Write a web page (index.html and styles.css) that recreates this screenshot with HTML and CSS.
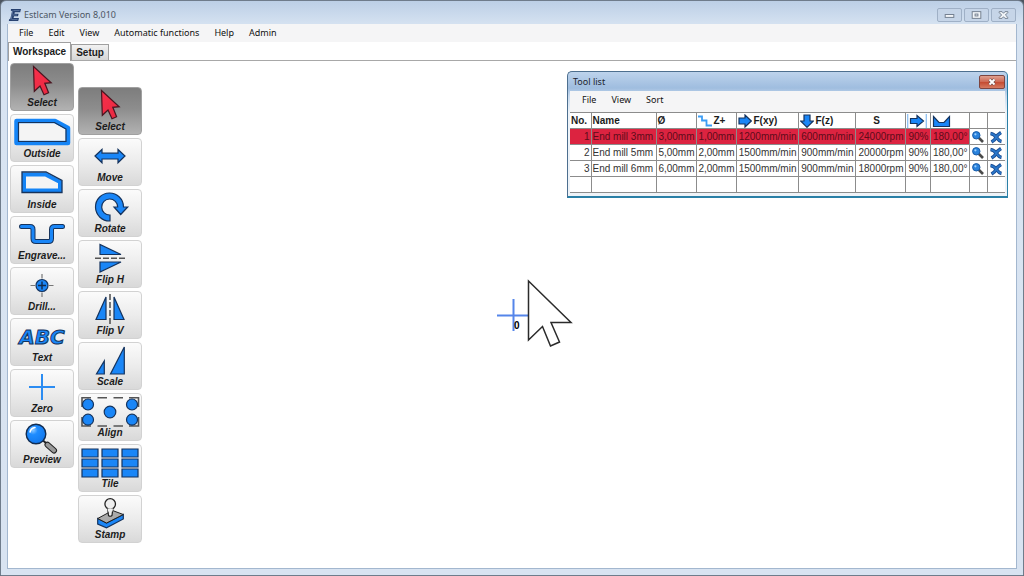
FILE: index.html
```html
<!DOCTYPE html>
<html lang="en">
<head>
<meta charset="utf-8">
<title>Estlcam Version 8,010</title>
<link rel="stylesheet" href="styles.css">
</head>
<body>
<svg class="defs" aria-hidden="true">
  <defs>
    <linearGradient id="cursor-red" x1="0" y1="0" x2="1" y2="1"><stop offset="0" stop-color="#f8304c"/><stop offset="1" stop-color="#e8283f"/></linearGradient>
    <radialGradient id="lens" cx="0.35" cy="0.3" r="0.8"><stop offset="0" stop-color="#8cc8ff"/><stop offset="0.3" stop-color="#1e8cff"/><stop offset="1" stop-color="#0f74ea"/></radialGradient>
    <symbol id="i-select" viewBox="1 1 62 33"><path class="ico-red" d="M23.5 3.5L41.2 19.7L34.8 20.3L38.6 29.7L34 31.7L30 23L24.3 28.3Z"/></symbol>
    <symbol id="i-lens" viewBox="0 0 14 14"><path d="M7 7L12 12" stroke="#4a4a4a" stroke-width="2.6"/><circle cx="5.3" cy="5.3" r="3.7" fill="#2a82dc" stroke="#175ba8"/><circle cx="4.4" cy="4.3" r="1.1" fill="#9cd0ff"/></symbol>
    <symbol id="i-del" viewBox="0 0 14 14"><path d="M1.500 3.500Q5 4 7.500 7.500T12.500 11.500M12 2.500Q8 5 7 7.500T2.500 12" fill="none" stroke="#1d4e94" stroke-width="3.400"/><path d="M1.800 3.500Q5 4 7.500 7.500T12 11.300M11.700 3Q8 5 7 7.500T3 11.700" fill="none" stroke="#2a78cc" stroke-width="1.600"/></symbol>
  </defs>
</svg>

<div class="window">
  <header class="titlebar">
    <svg class="logo" viewBox="0 0 14 14" aria-hidden="true"><path d="M3 1H13L12.2 4.2H6.8L6.5 5.8H10.6L10 8.2H6L5.6 10H11L10.2 13H.8L1.2 11.2L2.4 10.6L4 3.2L2.8 2.6Z" fill="#26406f"/><path d="M4.8 2.5L3 12M5.5 2.6H11.5M5 7H9M4 11.6H9.5" stroke="#7f97bd" stroke-width=".6" fill="none"/></svg>
    <h1 class="title">Estlcam Version 8,010</h1>
    <div class="caption">
      <button class="cap" aria-label="Minimize"><svg viewBox="0 0 24 12"><rect x="7.5" y="5.5" width="9" height="3"/></svg></button>
      <button class="cap" aria-label="Restore"><svg viewBox="0 0 24 12"><rect x="7.5" y="2.5" width="9" height="7"/><rect x="10.5" y="5" width="3" height="2"/></svg></button>
      <button class="cap" aria-label="Close"><svg viewBox="0 0 24 12"><path d="M7.5 2.5H10.5L12 4.2L13.500 2.500H16.500V3.500L14 6L16.500 8.500V9.500H13.500L12 7.800L10.500 9.500H7.500V8.500L10 6L7.500 3.500Z"/></svg></button>
    </div>
  </header>

  <div class="client">
    <nav class="menu" aria-label="Main">
      <button>File</button><button>Edit</button><button>View</button><button>Automatic functions</button><button>Help</button><button>Admin</button>
    </nav>
    <div class="tabs" role="tablist">
      <button class="tab tab-active" role="tab" aria-selected="true">Workspace</button>
      <button class="tab" role="tab" aria-selected="false">Setup</button>
    </div>

    <main class="workspace">
      <div class="tools">
        <button class="tool tool-on"><svg viewBox="1 1 62 33"><use href="#i-select" x="1" y="1" width="62" height="33"/></svg><span>Select</span></button>
        <button class="tool"><svg viewBox="1 1 62 33"><path d="M6.500 7H45L58 14V29H6.500Z" fill="#f4f4f4" stroke="#1484f6" stroke-width="4.500" stroke-linejoin="round"/><path d="M8.500 8.500H44.500L56 15V27.500H8.500Z" fill="none" stroke="#16335c" stroke-width="1.200"/></svg><span>Outside</span></button>
        <button class="tool"><svg viewBox="1 1 62 33"><path d="M14 9.500H35.500L50 17V25.500H14Z" fill="#f4f4f4" stroke="#1484f6" stroke-width="4"/><path d="M12 7H36L52 15.500V27.500H12Z" fill="none" stroke="#16335c" stroke-width="1.300"/></svg><span>Inside</span></button>
        <button class="tool"><svg viewBox="1 1 62 33"><path class="groove-edge" d="M11.500 10.500H20Q23 10.500 23 13.500V22.500Q23 25.500 26 25.500H38.500Q41.500 25.500 41.500 22.500V13.500Q41.500 10.500 44.500 10.500H52.500"/><path class="groove" d="M11.500 10.500H20Q23 10.500 23 13.500V22.500Q23 25.500 26 25.500H38.500Q41.500 25.500 41.500 22.500V13.500Q41.500 10.500 44.500 10.500H52.500"/></svg><span>Engrave...</span></button>
        <button class="tool"><svg viewBox="1 1 62 33"><circle class="ico" cx="32" cy="18.500" r="6"/><path d="M20.500 18.500H25M39 18.500H43.500M32 7V11.500M32 25.500V30" stroke="#777" stroke-width="1.200"/><path d="M28 18.500H36M32 14.500V22.500" stroke="#112b4d" stroke-width="1.400"/></svg><span>Drill...</span></button>
        <button class="tool"><svg viewBox="1 1 62 33"><text class="abc" x="32" y="26" text-anchor="middle">ABC</text></svg><span>Text</span></button>
        <button class="tool"><svg viewBox="1 1 62 33"><path d="M19 18H45M32 5V31" stroke="#2b8cf2" stroke-width="2"/></svg><span>Zero</span></button>
        <button class="tool"><svg viewBox="1 1 62 33"><path d="M33 20.500L36.500 23.500" stroke="#222" stroke-width="2"/><path d="M37.500 24.800L44 30.500" stroke="#222" stroke-width="6" stroke-linecap="round"/><path d="M37.500 24.800L44 30.500" stroke="#9a9a9a" stroke-width="4" stroke-linecap="round"/><circle cx="26" cy="14" r="9.800" fill="url(#lens)" stroke="#122c50" stroke-width="1.400"/><path d="M20 12Q21 8 25 7.500" fill="none" stroke="#fff" stroke-width="1.500" stroke-linecap="round"/></svg><span>Preview</span></button>
      </div>

      <div class="tools tools-edit">
        <button class="tool tool-on"><svg viewBox="1 1 62 33"><use href="#i-select" x="1" y="1" width="62" height="33"/></svg><span>Select</span></button>
        <button class="tool"><svg viewBox="1 1 62 33"><path class="ico" d="M17 18L24 11.500V15.200H40V11.500L47 18L40 24.800V21H24V24.800Z"/></svg><span>Move</span></button>
        <button class="tool"><svg viewBox="1 1 62 33"><path class="ico" d="M32 32A14 14 0 1 1 45.500 18H49.700L42.700 25.500L36 18H39.700A8 8 0 1 0 32 26Z"/></svg><span>Rotate</span></button>
        <button class="tool"><svg viewBox="1 1 62 33"><path class="ico" d="M22 4.500V14.500H43ZM22 32V22H43Z"/><path class="axis" d="M17 18.300H47"/></svg><span>Flip H</span></button>
        <button class="tool"><svg viewBox="1 1 62 33"><path class="ico" d="M18 28.500H28V6ZM46 28.500H36V6Z"/><path class="axis" d="M32 3V34"/></svg><span>Flip V</span></button>
        <button class="tool"><svg viewBox="1 1 62 33"><path class="ico" d="M18.500 32H26.300V19ZM32.500 32H46.300V5Z"/></svg><span>Scale</span></button>
        <button class="tool"><svg viewBox="1 1 62 33"><path d="M4 14V4.700H13M19.500 4.700H29M35.500 4.700H45M51 4.700H60.500V14M60.500 24V33H51M45 33H35.500M29 33H19.500M13 33H4V24" fill="none" stroke="#555" stroke-width="1.600"/><g class="ico"><circle cx="10" cy="11.500" r="5.500"/><circle cx="54" cy="11.500" r="5.500"/><circle cx="32" cy="19" r="5.800"/><circle cx="10" cy="26.700" r="5.500"/><circle cx="54" cy="26.700" r="5.500"/></g></svg><span>Align</span></button>
        <button class="tool"><svg viewBox="1 1 62 33"><path class="ico" d="M4 5H20V13H4ZM24 5H40V13H24ZM44 5H60V13H44ZM4 15H20V23H4ZM24 15H40V23H24ZM44 15H60V23H44ZM4 25H20V33H4ZM24 25H40V33H24ZM44 25H60V33H44Z"/></svg><span>Tile</span></button>
        <button class="tool"><svg viewBox="1 1 62 33"><path class="ico" d="M19.700 23.500L28.500 28L45.300 19.500V24L28.500 32.800L19.700 29Z"/><path d="M19.700 23.500L34.500 15.500L45.300 19.500L28.500 28Z" fill="#aaa" stroke="#222"/><path d="M29.500 12.500L30.500 20.500Q32 22 34 20.500L35 12.500Z" fill="#eee" stroke="#222" stroke-width="1.200"/><circle cx="32.200" cy="9" r="5.300" fill="#eee" stroke="#222" stroke-width="1.300"/><path d="M29.500 13.500L30 16.500H34.500L35 13.500" fill="#eee"/></svg><span>Stamp</span></button>
      </div>

      <div class="canvas">
        <svg class="origin" viewBox="0 0 32 34" aria-hidden="true"><path d="M0 16.500H32M16.500 0V32" stroke="#5585ea" stroke-width="2"/></svg>
        <span class="origin-label">0</span>
        <svg class="pointer" viewBox="0 0 46 70" aria-hidden="true"><path d="M1.500 2L44 43.500H24L32.500 63L23.500 67L15.500 47.500L1.500 61Z" fill="#fff" stroke="#2b2b2b" stroke-width="1.500"/></svg>

        <section class="toollist" aria-label="Tool list">
          <header class="tl-title"><h2>Tool list</h2><button class="tl-close" aria-label="Close tool list"><svg viewBox="0 0 24 12"><path d="M9.500 3.500L14.500 8.500M14.500 3.500L9.500 8.500" stroke="#75524d" stroke-width="3.200"/><path d="M9.500 3.500L14.500 8.500M14.500 3.500L9.500 8.500" stroke="#fff" stroke-width="1.800"/></svg></button></header>
          <nav class="menu tl-menu" aria-label="Tool list"><button>File</button><button>View</button><button>Sort</button></nav>
          <table class="grid">
            <colgroup><col class="c-no"><col class="c-name"><col class="c-dia"><col class="c-dia"><col class="c-fxy"><col class="c-fz"><col class="c-s"><col class="c-pct"><col class="c-ang"><col class="c-act"><col class="c-act"></colgroup>
            <thead>
              <tr>
                <th>No.</th><th>Name</th><th>Ø</th>
                <th><div class="hd"><svg class="h-ico" viewBox="0 0 14 14"><path d="M0 2.500H4V6.500H8.500V11.500H14" fill="none" stroke="#3c9df5" stroke-width="1.800"/></svg>Z+</div></th>
                <th><div class="hd"><svg class="h-ico" viewBox="0 0 14 14"><path class="ico" d="M1 4H7V1L13.300 7L7 13V10H1Z"/></svg>F(xy)</div></th>
                <th><div class="hd"><svg class="h-ico" viewBox="0 0 14 14"><path class="ico" d="M4 1H10V7H13.300L7 13.300L.7 7H4Z"/></svg>F(z)</div></th>
                <th class="mid">S</th>
                <th><div class="hd"><svg class="h-wide" viewBox="0 0 20 14"><path d="M.7 0V14M19.300 0V14" stroke="#8fc0f2" stroke-width="1.300"/><path class="ico" d="M3.500 4.500H10V1.500L16.500 7L10 12.500V9.500H3.500Z"/></svg></div></th>
                <th><div class="hd"><svg class="h-wide" viewBox="0 0 20 14"><path class="ico" d="M1.500 2.500L7 8.500H12L17.500 2.500V12.500H1.500Z"/></svg></div></th>
                <th></th><th></th>
              </tr>
            </thead>
            <tbody>
              <tr class="sel"><td>1</td><td class="name">End mill 3mm</td><td>3,00mm</td><td>1,00mm</td><td>1200mm/min</td><td>600mm/min</td><td>24000rpm</td><td>90%</td><td>180,00°</td><td class="act"><button aria-label="Inspect tool 1"><svg><use href="#i-lens"/></svg></button></td><td class="act"><button aria-label="Delete tool 1"><svg><use href="#i-del"/></svg></button></td></tr>
              <tr><td>2</td><td class="name">End mill 5mm</td><td>5,00mm</td><td>2,00mm</td><td>1500mm/min</td><td>900mm/min</td><td>20000rpm</td><td>90%</td><td>180,00°</td><td class="act"><button aria-label="Inspect tool 2"><svg><use href="#i-lens"/></svg></button></td><td class="act"><button aria-label="Delete tool 2"><svg><use href="#i-del"/></svg></button></td></tr>
              <tr><td>3</td><td class="name">End mill 6mm</td><td>6,00mm</td><td>2,00mm</td><td>1500mm/min</td><td>900mm/min</td><td>18000rpm</td><td>90%</td><td>180,00°</td><td class="act"><button aria-label="Inspect tool 3"><svg><use href="#i-lens"/></svg></button></td><td class="act"><button aria-label="Delete tool 3"><svg><use href="#i-del"/></svg></button></td></tr>
              <tr><td></td><td></td><td></td><td></td><td></td><td></td><td></td><td></td><td></td><td></td><td></td></tr>
            </tbody>
          </table>
        </section>
      </div>
    </main>
  </div>
</div>
</body>
</html>
```
FILE: styles.css
```css
* { box-sizing: border-box; }
body { margin: 0; background: #4c5560; font-family: "Liberation Sans", Arial, sans-serif; font-size: 10px; color: #1c1c1c; }
button { margin: 0; padding: 0; border: 0; background: none; font: inherit; color: inherit; }
svg { display: block; }
.defs { position: absolute; width: 0; height: 0; }

.window { display: flex; flex-direction: column; min-height: 100vh; padding: 0 6px 6px; border: 1px solid #6f7c8b; border-radius: 6px 6px 0 0; background: linear-gradient(#bccfe6, #d8e4f2 26px, #d8e3f1); }
.titlebar { display: flex; align-items: center; height: 23px; padding: 4px 1px 0; }
.logo { width: 14px; height: 14px; margin-right: 2px; }
.title { margin: 0; font: 400 9px/14px "Noto Sans", "Open Sans", sans-serif; color: #4c5663; flex: 1; }
.caption { display: flex; gap: 2px; }
.cap { width: 25px; height: 14px; border: 1px solid #9fb0c6; border-radius: 2px; background: #c6d5e8; }
.cap svg { width: 100%; height: 12px; fill: #f2f5f8; stroke: #727e8e; stroke-width: 1; }

.client { display: flex; flex-direction: column; flex: 1; border: 1px solid #a3b7cf; border-top: 0; background: #fff; }
.menu { display: flex; align-items: center; gap: 15px; height: 18px; padding-left: 11px; background: #f5f5f6; font: 9px/16px "Noto Sans", "Open Sans", sans-serif; color: #111; }

.tabs { display: flex; align-items: flex-end; height: 19px; border-bottom: 1px solid #a8a8a8; background: #fff; }
.tab { height: 16px; padding: 0 4px; border: 1px solid #a0a0a0; border-bottom: 0; background: linear-gradient(#f2f2f2, #d6d6d6); font-weight: 700; }
.tab-active { height: 19px; margin-bottom: -1px; padding: 0 4px 2px; background: #fff; }

.workspace { position: relative; display: flex; flex: 1; gap: 4px; padding: 2px; }
.tools { display: flex; flex-direction: column; gap: 3px; }
.tools-edit { padding-top: 24px; }
.tool { display: flex; flex-direction: column; width: 64px; height: 48px; border: 1px solid #d2d2d2; border-radius: 4px; background: linear-gradient(#fbfbfb, #ececec 50%, #d9d9d9); font-style: italic; font-weight: 700; line-height: 12px; text-align: center; }
.tool svg { width: 100%; height: 33px; }
.tool-on { border-color: #a0a0a0; background: linear-gradient(#7d7d7d, #8d8d8d 45%, #b2b2b2); }

.ico { fill: #1a86f7; stroke: #14335e; stroke-width: 1.2px; }
.ico-red { fill: url(#cursor-red); stroke: #4a1520; stroke-width: 1.2px; }
.axis { stroke: #555; stroke-width: 1.6px; stroke-dasharray: 6 2; }
.groove, .groove-edge { fill: none; stroke-linecap: round; stroke: #16335c; stroke-width: 5px; }
.groove { stroke: #1a86f7; stroke-width: 3px; }
.abc { font: italic 700 20px "DejaVu Sans", sans-serif; fill: #1a86f7; stroke: #14335e; stroke-width: 1px; }

.canvas { flex: 1; }
.origin { position: absolute; left: 489px; top: 238px; width: 32px; height: 34px; }
.origin-label { position: absolute; left: 506px; top: 259px; font-weight: 700; line-height: 12px; color: #000; }
.pointer { position: absolute; left: 519px; top: 218px; width: 46px; height: 70px; }

.toollist { position: absolute; right: 8px; top: 10px; padding: 0 2px 3px; border: 1px solid #4d6f8f; border-right-color: #2a7fa6; border-bottom: 2px solid #2a7fa6; border-radius: 5px 5px 0 0; background: linear-gradient(#bdd3ec, #9fbddf 16px, #c8daee 24px, #eef3f8 40px); }
.tl-title { display: flex; align-items: center; justify-content: space-between; height: 19px; padding: 0 0 0 3px; }
.tl-title h2 { margin: 0; font: 400 9px/14px "Noto Sans", "Open Sans", sans-serif; color: #1c242e; }
.tl-close { width: 26px; height: 14px; border: 1px solid #7d4540; border-radius: 2px; background: linear-gradient(#e0a090, #cd6650 50%, #c44a30 51%, #d67a60); }
.tl-close svg { width: 100%; height: 12px; }
.tl-menu { height: 21px; padding: 0 0 4px 12px; }

.grid { border-collapse: collapse; table-layout: fixed; width: 435px; background: #fff; }
.grid th, .grid td { height: 16px; padding: 0 1px; border: 1px solid #8c8c8c; line-height: 15px; white-space: nowrap; overflow: hidden; }
.grid th:first-child, .grid td:first-child { border-left: 0; }
.grid th:last-child, .grid td:last-child { border-right: 0; }
.grid th { text-align: left; font-weight: 700; }
.grid .mid { text-align: center; padding-right: 8px; }
.grid td { text-align: right; color: #333; }
.grid .name { text-align: left; }
.grid .sel td { background: #dc2340; color: #5c0c1a; }
.grid .sel .act { background: #fff; }
.act button { display: block; }
.act svg { width: 14px; height: 14px; }
.c-no { width: 21px; }
.c-name { width: 65px; }
.c-dia { width: 40px; }
.c-fxy { width: 62px; }
.c-fz { width: 57px; }
.c-s { width: 50px; }
.c-pct { width: 25px; }
.c-ang { width: 39px; }
.c-act { width: 18px; }
.hd { display: flex; align-items: center; gap: 2px; }
.h-ico { width: 14px; height: 14px; flex: none; }
.h-wide { width: 20px; height: 14px; flex: none; }
```
